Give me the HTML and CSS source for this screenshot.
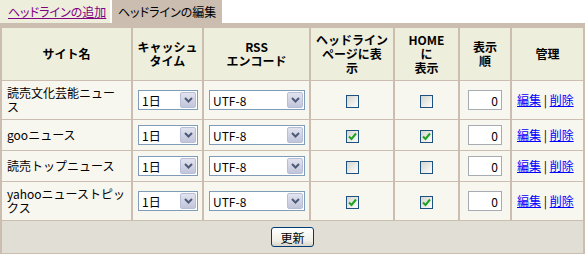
FILE: index.html
```html
<!DOCTYPE html>
<html lang="ja">
<head>
    <meta charset="UTF-8">
    <title>ヘッドラインの編集</title>
    <link rel="stylesheet" href="styles.css">
</head>
<body>

    <!-- Tabs -->
    <div class="tabs">
        <a class="tab" href="#">ヘッドラインの追加</a>
        <span class="tab current">ヘッドラインの編集</span>
    </div>
    <div class="tab-bar"></div>

    <!-- Headline list -->
    <form>
    <table class="lines">
        <thead>
            <tr>
                <th class="c-name">サイト名</th>
                <th class="c-cache">キャッシュ<br>タイム</th>
                <th class="c-enc">RSS<br>エンコード</th>
                <th class="c-page">ヘッドライン<br>ページに表<br>示</th>
                <th class="c-home">HOME<br>に<br>表示</th>
                <th class="c-order">表示<br>順</th>
                <th>管理</th>
            </tr>
        </thead>
        <tbody>
            <tr>
                <td class="name">読売文化芸能ニュース</td>
                <td><span class="combo cache"><select><option>1日</option></select><span class="drop"><svg viewBox="0 0 9 6" width="9" height="6"><polyline points="1,1 4.5,4.5 8,1" /></svg></span></span></td>
                <td><span class="combo enc"><select><option>UTF-8</option></select><span class="drop"><svg viewBox="0 0 9 6" width="9" height="6"><polyline points="1,1 4.5,4.5 8,1" /></svg></span></span></td>
                <td><span class="chk"><svg viewBox="0 0 13 13" width="13" height="13"><rect class="box" x="0.5" y="0.5" width="12" height="12" /></svg></span></td>
                <td><span class="chk"><svg viewBox="0 0 13 13" width="13" height="13"><rect class="box" x="0.5" y="0.5" width="12" height="12" /></svg></span></td>
                <td><input class="order" type="text" value="0"></td>
                <td class="manage"><a href="#">編集</a> | <a href="#">削除</a></td>
            </tr>
            <tr>
                <td class="name">gooニュース</td>
                <td><span class="combo cache"><select><option>1日</option></select><span class="drop"><svg viewBox="0 0 9 6" width="9" height="6"><polyline points="1,1 4.5,4.5 8,1" /></svg></span></span></td>
                <td><span class="combo enc"><select><option>UTF-8</option></select><span class="drop"><svg viewBox="0 0 9 6" width="9" height="6"><polyline points="1,1 4.5,4.5 8,1" /></svg></span></span></td>
                <td><span class="chk"><svg viewBox="0 0 13 13" width="13" height="13"><rect class="box" x="0.5" y="0.5" width="12" height="12" /><polyline class="tick" points="3,6.5 5.5,9 10,3.5" /></svg></span></td>
                <td><span class="chk"><svg viewBox="0 0 13 13" width="13" height="13"><rect class="box" x="0.5" y="0.5" width="12" height="12" /><polyline class="tick" points="3,6.5 5.5,9 10,3.5" /></svg></span></td>
                <td><input class="order" type="text" value="0"></td>
                <td class="manage"><a href="#">編集</a> | <a href="#">削除</a></td>
            </tr>
            <tr>
                <td class="name">読売トップニュース</td>
                <td><span class="combo cache"><select><option>1日</option></select><span class="drop"><svg viewBox="0 0 9 6" width="9" height="6"><polyline points="1,1 4.5,4.5 8,1" /></svg></span></span></td>
                <td><span class="combo enc"><select><option>UTF-8</option></select><span class="drop"><svg viewBox="0 0 9 6" width="9" height="6"><polyline points="1,1 4.5,4.5 8,1" /></svg></span></span></td>
                <td><span class="chk"><svg viewBox="0 0 13 13" width="13" height="13"><rect class="box" x="0.5" y="0.5" width="12" height="12" /></svg></span></td>
                <td><span class="chk"><svg viewBox="0 0 13 13" width="13" height="13"><rect class="box" x="0.5" y="0.5" width="12" height="12" /></svg></span></td>
                <td><input class="order" type="text" value="0"></td>
                <td class="manage"><a href="#">編集</a> | <a href="#">削除</a></td>
            </tr>
            <tr>
                <td class="name">yahooニューストピックス</td>
                <td><span class="combo cache"><select><option>1日</option></select><span class="drop"><svg viewBox="0 0 9 6" width="9" height="6"><polyline points="1,1 4.5,4.5 8,1" /></svg></span></span></td>
                <td><span class="combo enc"><select><option>UTF-8</option></select><span class="drop"><svg viewBox="0 0 9 6" width="9" height="6"><polyline points="1,1 4.5,4.5 8,1" /></svg></span></span></td>
                <td><span class="chk"><svg viewBox="0 0 13 13" width="13" height="13"><rect class="box" x="0.5" y="0.5" width="12" height="12" /><polyline class="tick" points="3,6.5 5.5,9 10,3.5" /></svg></span></td>
                <td><span class="chk"><svg viewBox="0 0 13 13" width="13" height="13"><rect class="box" x="0.5" y="0.5" width="12" height="12" /><polyline class="tick" points="3,6.5 5.5,9 10,3.5" /></svg></span></td>
                <td><input class="order" type="text" value="0"></td>
                <td class="manage"><a href="#">編集</a> | <a href="#">削除</a></td>
            </tr>
        </tbody>
        <tfoot>
            <tr>
                <td colspan="7"><button type="button" class="update">更新</button></td>
            </tr>
        </tfoot>
    </table>
    </form>

    <svg width="0" height="0" class="defs">
        <defs>
            <linearGradient id="chk-fill" x1="0" y1="0" x2="1" y2="1">
                <stop offset="0" stop-color="#d4d4cc" />
                <stop offset="1" stop-color="#ffffff" />
            </linearGradient>
        </defs>
    </svg>

</body>
</html>
```

FILE: styles.css
```css
/* General styles */
body {
    margin: 0;
    font-family: "Noto Sans CJK JP", sans-serif;
    font-size: 12px;
    line-height: 14px;
    color: #000;
    background-color: #fff;
}

form {
    margin: 0;
}

.defs {
    position: absolute;
}

/* Tabs */
.tabs {
    display: flex;
    gap: 2px;
    height: 23px;
}

.tab {
    display: flex;
    align-items: center;
    width: 110px;
    padding-left: 8px;
    box-sizing: border-box;
    background-color: #eeeedd;
    font-feature-settings: "palt";
    color: #000;
}

a.tab {
    color: #800080;
}

.tab.current {
    background-color: #cbbdb0;
    padding-left: 6px;
}

.tab-bar {
    height: 4px;
    background-color: #cbbdb0;
}

/* Table */
.lines {
    width: 100%;
    table-layout: fixed;
    border-collapse: separate;
    border-spacing: 2px 1px;
    background-color: #cbbdb0;
}

.lines th {
    box-sizing: border-box;
    padding: 5px 2px;
    background-color: #eeeedd;
    font-weight: bold;
    text-align: center;
    white-space: nowrap;
}

.c-name { width: 129px; }
.c-cache { width: 69px; }
.c-enc { width: 105px; }
.c-page { width: 82px; }
.c-home { width: 63px; }
.c-order { width: 50px; }

.lines td {
    padding: 5px;
    background-color: #f7f6ef;
    text-align: center;
    vertical-align: middle;
}

.lines td.name {
    text-align: left;
}

.lines td.manage {
    text-align: left;
    white-space: nowrap;
}

.manage a {
    color: #0000ff;
}

/* Combo boxes */
.combo {
    display: inline-flex;
    height: 20px;
    box-sizing: border-box;
    border: 1px solid #7f9db9;
    background-color: #fff;
    vertical-align: middle;
}

.combo.cache { width: 60px; }
.combo.enc { width: 96px; }

.combo select {
    flex: 1;
    min-width: 0;
    appearance: none;
    border: none;
    outline: none;
    background: #fff;
    padding: 0 0 0 3px;
    font-family: inherit;
    font-size: 12px;
    color: #000;
}

.drop {
    display: flex;
    align-items: center;
    justify-content: center;
    width: 16px;
    margin: 1px;
    border: 1px solid #b7bfd8;
    border-radius: 2px;
    box-sizing: border-box;
    background: linear-gradient(#e2e3ef, #c1c5da);
}

.drop polyline {
    fill: none;
    stroke: #4d5a78;
    stroke-width: 2;
}

/* Checkboxes */
.chk {
    display: inline-block;
    width: 13px;
    height: 13px;
    vertical-align: middle;
}

.chk svg {
    display: block;
}

.chk .box {
    fill: url(#chk-fill);
    stroke: #1c5180;
}

.chk .tick {
    fill: none;
    stroke: #21a121;
    stroke-width: 2;
}

/* Order input */
.order {
    width: 34px;
    height: 20px;
    box-sizing: border-box;
    border: 1px solid #a5acb2;
    padding: 0 3px;
    text-align: right;
    font-family: inherit;
    font-size: 12px;
    vertical-align: middle;
}

/* Footer */
.lines tfoot td {
    padding: 6px 5px;
    background-color: #e1ded6;
}

.update {
    height: 20px;
    padding: 0 8px;
    border: 1px solid #003c74;
    border-radius: 3px;
    background: linear-gradient(#ffffff, #f0efe8 70%, #d8d3c8);
    font-family: inherit;
    font-size: 12px;
    color: #000;
    cursor: pointer;
}
```
